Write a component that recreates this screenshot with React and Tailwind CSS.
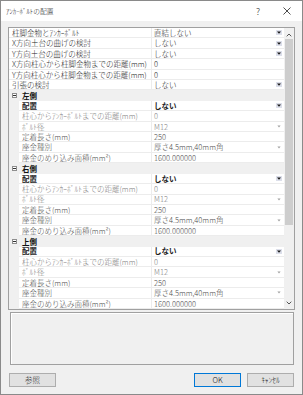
import React from 'react';

const F = "font-['Noto_Sans_CJK_JP',sans-serif]";

const top = [
  { label: '柱脚金物とｱﾝｶｰﾎﾞﾙﾄ', value: '直結しない', dd: 'on' },
  { label: 'X方向土台の曲げの検討', value: 'しない', dd: 'on' },
  { label: 'Y方向土台の曲げの検討', value: 'しない', dd: 'on' },
  { label: 'X方向柱心から柱脚金物までの距離(mm)', value: '0' },
  { label: 'Y方向柱心から柱脚金物までの距離(mm)', value: '0' },
  { label: '引張の検討', value: 'しない', dd: 'on' },
];

const sub = [
  { label: '配置', value: 'しない', dd: 'on', bold: true },
  { label: '柱心からｱﾝｶｰﾎﾞﾙﾄまでの距離(mm)', value: '0', tone: 'light' },
  { label: 'ﾎﾞﾙﾄ径', value: 'M12', dd: 'off', tone: 'light' },
  { label: '定着長さ(mm)', value: '250', tone: 'dark' },
  { label: '座金種別', value: '厚さ4.5mm,40mm角', dd: 'off', tone: 'dark' },
  { label: '座金のめり込み面積(mm²)', value: '1600.000000', tone: 'dark' },
];

const rows = [
  ...top.map((r) => ({ ...r, kind: 'top' })),
  ...['左側', '右側', '上側'].flatMap((c) => [
    { kind: 'cat', label: c },
    ...sub.map((r) => ({ ...r, kind: 'sub' })),
  ]),
];

function Drop({ on }) {
  if (on) {
    return (
      <div className="w-[6px] h-[5px] bg-[#dcdfea] flex items-center justify-center shrink-0">
        <svg width="4" height="3" viewBox="0 0 4 3">
          <path d="M0 0.4H4L2 2.8Z" fill="#1a1a1a" />
        </svg>
      </div>
    );
  }
  return (
    <div className="w-[6px] h-[5px] flex items-center justify-center shrink-0">
      <svg width="4" height="3" viewBox="0 0 4 3">
        <path d="M0.4 0.6H3.6L2 2.5Z" fill="#a0a0a0" />
      </svg>
    </div>
  );
}

function Row({ r }) {
  if (r.kind === 'cat') {
    return (
      <div className="flex h-[10.42px] items-center bg-[#f0f0f0] shrink-0">
        <div className="ml-[3px] w-[5px] h-[5px] border border-[#8e8e8e] bg-white flex items-center justify-center">
          <div className="w-[3px] h-px bg-[#333]" />
        </div>
        <span className="ml-[5px] font-bold text-[#111] leading-none">{r.label}</span>
      </div>
    );
  }
  const color =
    r.tone === 'light' ? 'text-[#808080]' : r.tone === 'dark' ? 'text-[#4a4a4a]' : 'text-[#1c1c1c]';
  const weight = r.bold ? 'font-bold' : 'font-light';
  return (
    <div className="flex h-[10.42px] shrink-0">
      <div className="w-[143px] flex shrink-0 border-r border-[#ececec]">
        {r.kind === 'sub' && <div className="w-[10px] bg-[#f0f0f0] shrink-0" />}
        <div className="flex-1 flex items-center pl-[3px] border-b border-[#ececec] overflow-hidden">
          <span className={`whitespace-nowrap leading-none ${color} ${weight}`}>{r.label}</span>
        </div>
      </div>
      <div className="flex-1 flex items-center pl-[2px] pr-[2px] border-b border-[#ececec]">
        <span className={`flex-1 whitespace-nowrap leading-none ${color} ${weight}`}>{r.value}</span>
        {r.dd && <Drop on={r.dd === 'on'} />}
      </div>
    </div>
  );
}

function Chevron({ up }) {
  return (
    <svg width="6" height="4" viewBox="0 0 6 4">
      <path
        d={up ? 'M0.7 3.3L3 1L5.3 3.3' : 'M0.7 0.7L3 3L5.3 0.7'}
        fill="none"
        stroke="#555"
        strokeWidth="1"
      />
    </svg>
  );
}

export default function App() {
  return (
    <div
      className={`w-[303px] h-[395px] border border-[#8a8a8a] bg-[#f0f0f0] flex flex-col text-[7.5px] ${F}`}
    >
      <div className="h-[20px] bg-white flex items-center shrink-0">
        <span className="pl-[5px] text-[6.8px] text-[#222] font-light leading-none">ｱﾝｶｰﾎﾞﾙﾄの配置</span>
        <div className="flex-1" />
        <div className="w-[20px] flex items-center justify-center text-[9px] text-[#222] font-light leading-none">?</div>
        <div className="w-[20px] ml-[9px] mr-[5px] flex items-center justify-center">
          <svg width="8" height="8" viewBox="0 0 8 8">
            <path d="M0.5 0.5L7.5 7.5M7.5 0.5L0.5 7.5" stroke="#222" strokeWidth="0.8" />
          </svg>
        </div>
      </div>

      <div className="flex-1 flex flex-col px-[7px] pt-[6px]">
        <div className="border border-[#a0a0a0] bg-white flex">
          <div className="flex-1 flex flex-col">
            {rows.map((r, i) => (
              <Row key={i} r={r} />
            ))}
          </div>
          <div className="w-[10px] bg-[#f0f0f0] flex flex-col items-center shrink-0">
            <div className="h-[11px] flex items-center justify-center pt-[2px]">
              <Chevron up />
            </div>
            <div className="w-[8px] h-[186px] bg-[#cdcdcd]" />
            <div className="flex-1" />
            <div className="h-[11px] flex items-center justify-center">
              <Chevron />
            </div>
          </div>
        </div>

        <div className="mt-[2px] ml-[2px] mr-[1px] h-[53px] border border-[#a0a0a0] bg-[#f0f0f0] shadow-[inset_1px_1px_0_#ffffff]" />

        <div className="mt-[8px] flex items-center pl-[1px] pr-[1px] font-light">
          <div className="w-[47px] h-[14px] bg-[#e1e1e1] border border-[#adadad] flex items-center justify-center leading-none text-[#111]">
            参照
          </div>
          <div className="flex-1" />
          <div className="w-[47px] h-[14px] bg-[#e1e1e1] border border-[#0078d7] flex items-center justify-center leading-none text-[#111]">
            OK
          </div>
          <div className="w-[47px] h-[14px] ml-[6px] bg-[#e1e1e1] border border-[#adadad] flex items-center justify-center leading-none text-[#111]">
            ｷｬﾝｾﾙ
          </div>
        </div>
      </div>
    </div>
  );
}
